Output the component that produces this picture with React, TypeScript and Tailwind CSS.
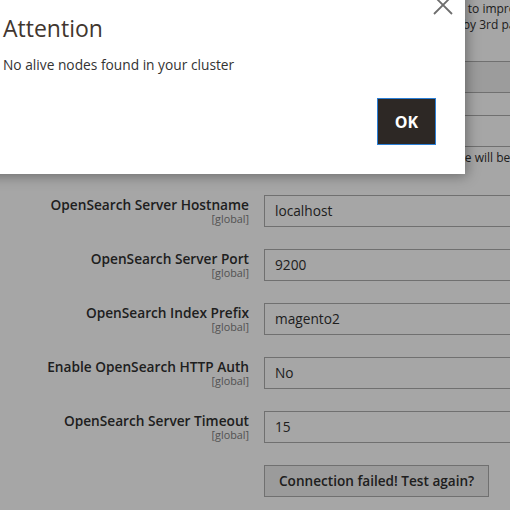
interface FieldProps {
  label: string;
  value: string;
  disabled?: boolean;
  scope?: boolean;
}

const fields: FieldProps[] = [
  { label: 'OpenSearch Server Hostname', value: 'localhost' },
  { label: 'OpenSearch Server Port', value: '9200' },
  { label: 'OpenSearch Index Prefix', value: 'magento2' },
  { label: 'Enable OpenSearch HTTP Auth', value: 'No' },
  { label: 'OpenSearch Server Timeout', value: '15' },
];

function Field({ label, value, disabled, scope = true }: FieldProps) {
  return (
    <div className="flex gap-[15px]">
      <div className="w-[249px] shrink-0 text-right">
        <div className="pt-px text-[13.7px] font-semibold leading-[17px] text-[#303030]">
          {label}
        </div>
        {scope && (
          <div className="text-[10.8px] leading-[11px] text-[#808080]">[global]</div>
        )}
      </div>
      <div className="w-[320px] shrink-0">
        <div
          className={`h-[32px] border border-[#adadad] px-[10px] text-[13.7px] leading-[30px] text-[#303030] ${
            disabled ? 'bg-[#f0f0f0]' : 'bg-white'
          }`}
        >
          {value}
        </div>
      </div>
    </div>
  );
}

function Note({ lines, className = '' }: { lines: string[]; className?: string }) {
  return (
    <div className={`flex gap-[15px] ${className}`}>
      <div className="w-[249px] shrink-0" />
      <div className="text-[12px] leading-[16px] text-[#303030]">
        {lines.map(line => (
          <div key={line} className="whitespace-nowrap">
            {line}
          </div>
        ))}
      </div>
    </div>
  );
}

export default function App() {
  return (
    <div className="relative h-[510px] w-[510px] overflow-hidden bg-white font-['Open_Sans',sans-serif]">
      {/* page behind the modal */}
      <div className="pt-px">
        <Note
          lines={[
            'Search query data shall be collected to improve relevance',
            'results and may later be processed by 3rd party services.',
          ]}
        />
        <div className="mt-[28px]">
          <Field label="Search Engine" value="OpenSearch" disabled />
        </div>
        <div className="mt-[22px]">
          <Field label="Minimal Query Length" value="3" />
        </div>
        <Note
          className="mt-[3px]"
          lines={['If the connection fails, the API service will be unavailable.']}
        />
        <div className="mt-[29px] flex flex-col gap-[22px]">
          {fields.map(f => (
            <Field key={f.label} {...f} />
          ))}
          <div className="flex gap-[15px]">
            <div className="w-[249px] shrink-0" />
            <button className="h-[32px] border border-[#adadad] bg-[#eeeeee] px-[14px] text-[13.6px] font-semibold text-[#303030]">
              Connection failed! Test again?
            </button>
          </div>
        </div>
      </div>

      {/* overlay */}
      <div className="absolute inset-0 bg-[rgba(0,0,0,0.35)]" />

      {/* modal */}
      <div className="absolute left-[-27px] top-[-20px] h-[194px] w-[492px] bg-white shadow-[0_0_12px_2px_rgba(0,0,0,0.35)]">
        <button className="absolute left-[460px] top-[15px]" aria-label="Close">
          <svg width="20" height="20" viewBox="0 0 20 20" fill="none">
            <path d="M1 1L19 19M19 1L1 19" stroke="#6e6e6e" strokeWidth="1.8" />
          </svg>
        </button>
        <div className="px-[30px] pt-[34px]">
          <h1 className="text-[23px] leading-[29px] text-[#41362f]">Attention</h1>
          <p className="mt-[12px] text-[13.75px] leading-[20px] text-[#333333]">
            No alive nodes found in your cluster
          </p>
          <div className="mt-[23px] flex justify-end">
            <button className="-mr-px h-[47px] w-[59px] border border-[#2b7fd6] bg-[#2d2825] text-[16px] font-bold text-white">
              OK
            </button>
          </div>
        </div>
      </div>
    </div>
  );
}
